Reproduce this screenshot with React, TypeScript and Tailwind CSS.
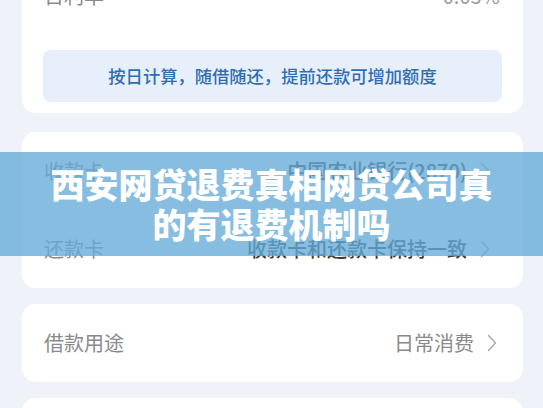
import type { ReactNode } from "react"

const font = { fontFamily: '"Noto Sans CJK SC", "Noto Sans", sans-serif' }

function Chevron() {
  return (
    <svg width="10" height="18" viewBox="0 0 10 18" fill="none" className="shrink-0">
      <polyline points="1.5,1.5 8.5,9 1.5,16.5" stroke="#a8a8a8" strokeWidth="1.4" strokeLinecap="round" strokeLinejoin="round" />
    </svg>
  )
}

function Row({ label, value, dark, tight }: { label: string; value: ReactNode; dark?: boolean; tight?: boolean }) {
  return (
    <div className={tight ? "flex h-[78px] items-center justify-between pl-[22px] pr-[33px]" : "flex h-[78px] items-center justify-between pl-[22px] pr-[26px]"}>
      <span className="text-[20px] text-[#8a8a8a]">{label}</span>
      <div className="flex items-center gap-[13px]">
        <span className={dark ? "text-[20px] font-medium text-[#3a3a3a]" : "text-[20px] text-[#8a8a8a]"}>{value}</span>
        <Chevron />
      </div>
    </div>
  )
}

export default function App() {
  return (
    <div className="relative h-[408px] w-[543px] overflow-hidden bg-[#eff3f9]" style={font}>
      <div className="-mt-[43px] flex flex-col pl-[22px] pr-[20px]">
        {/* rate card */}
        <div className="rounded-[14px] bg-white pb-[11px]">
          <div className="flex h-[78px] items-center justify-between pl-[22px] pr-[23px]">
            <span className="text-[20px] text-[#8a8a8a]">日利率</span>
            <span className="text-[20px] text-[#9a9a9a]">0.05%</span>
          </div>
          <div className="mx-[21px] mt-[15px] flex h-[52px] items-center justify-center rounded-[8px] bg-[#e7effb]">
            <span className="text-[17.3px] font-medium text-[#2f6db3]">按日计算，随借随还，提前还款可增加额度</span>
          </div>
        </div>

        {/* card settings */}
        <div className="mt-[19px] rounded-[14px] bg-white">
          <Row label="收款卡" value="中国农业银行(2870)" dark tight />
          <Row label="还款卡" value="收款卡和还款卡保持一致" dark tight />
        </div>

        <div className="mt-[16px] rounded-[14px] bg-white">
          <Row label="借款用途" value="日常消费" />
        </div>

        <div className="mt-[16px] h-[78px] rounded-[14px] bg-white" />
      </div>

      {/* title banner */}
      <div className="absolute left-0 right-0 top-[152px] flex h-[104px] flex-col items-center justify-center bg-[rgba(100,170,215,0.78)]">
        <p className="text-center text-[34px] font-black leading-[40px] text-white">西安网贷退费真相网贷公司真</p>
        <p className="text-center text-[34px] font-black leading-[40px] text-white">的有退费机制吗</p>
      </div>
    </div>
  )
}
